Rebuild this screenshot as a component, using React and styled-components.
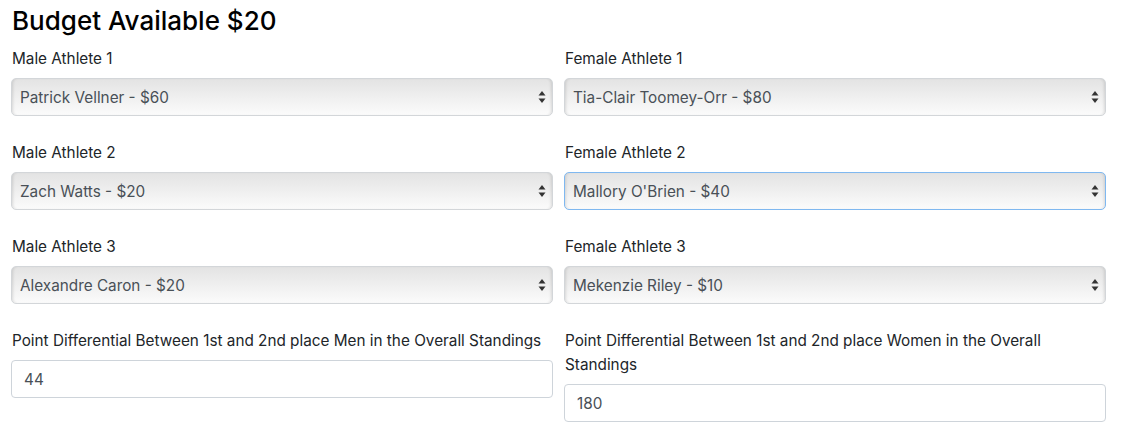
import React, { useState } from "react";
import styled, { createGlobalStyle } from "styled-components";

const GlobalStyle = createGlobalStyle`
  html, body {
    margin: 0;
    padding: 0;
    background: #fff;
  }
  body {
    font-family: Inter, "Liberation Sans", sans-serif;
    color: #212529;
  }
`;

const picks = [
  { male: "Patrick Vellner - $60", female: "Tia-Clair Toomey-Orr - $80" },
  { male: "Zach Watts - $20", female: "Mallory O'Brien - $40", focus: true },
  { male: "Alexandre Caron - $20", female: "Mekenzie Riley - $10" },
];

const Arrows = () => (
  <svg width="8" height="14" viewBox="0 0 8 14">
    <path d="M4 1 L7.5 5.5 L0.5 5.5 Z" fill="#333" />
    <path d="M4 13 L7.5 8.5 L0.5 8.5 Z" fill="#333" />
  </svg>
);

const AthleteSelect = ({ value, focus }) => {
  const [selected, setSelected] = useState(value);
  return (
    <SelectWrap>
      <Select
        $focus={focus}
        value={selected}
        onChange={(e) => setSelected(e.target.value)}
      >
        <option>{value}</option>
      </Select>
      <ArrowBox>
        <Arrows />
      </ArrowBox>
    </SelectWrap>
  );
};

export default function App() {
  return (
    <Page>
      <GlobalStyle />
      <Heading>Budget Available $20</Heading>
      {picks.map((p, i) => (
        <Row key={i}>
          <Group>
            <Label>Male Athlete {i + 1}</Label>
            <AthleteSelect value={p.male} />
          </Group>
          <Group>
            <Label>Female Athlete {i + 1}</Label>
            <AthleteSelect value={p.female} focus={p.focus} />
          </Group>
        </Row>
      ))}
      <Row>
        <Group>
          <Label>
            Point Differential Between 1st and 2nd place Men in the Overall
            Standings
          </Label>
          <Input type="text" defaultValue="44" />
        </Group>
        <Group>
          <Label>
            Point Differential Between 1st and 2nd place Women in the Overall
            Standings
          </Label>
          <Input type="text" defaultValue="180" />
        </Group>
      </Row>
    </Page>
  );
}

const Page = styled.div`
  padding: 4px 0 0 11px;
  width: 1095px;
`;

const Heading = styled.h3`
  margin: 0 0 8px 1px;
  font-size: 26px;
  font-weight: 500;
  line-height: 34px;
  color: #000;
`;

const Row = styled.div`
  display: grid;
  grid-template-columns: 542px 542px;
  column-gap: 11px;
  align-items: start;
`;

const Group = styled.div`
  display: flex;
  flex-direction: column;
  margin-bottom: 24px;
`;

const Label = styled.label`
  font-size: 15.3px;
  line-height: 24px;
  margin: 1px 0 7px 1px;
  color: #212529;
`;

const SelectWrap = styled.div`
  position: relative;
  height: 38px;
`;

const Select = styled.select`
  appearance: none;
  -webkit-appearance: none;
  width: 100%;
  height: 38px;
  box-sizing: border-box;
  padding: 0 28px 0 8px;
  font-family: inherit;
  font-size: 15.3px;
  color: #495057;
  border: 1px solid ${(p) => (p.$focus ? "#7fb8f0" : "#d3d6d9")};
  border-radius: 5px;
  background: linear-gradient(#e3e3e3, #f4f4f4 70%, #fbfbfb);
  box-shadow: inset 3px 0 3px -2px rgba(0, 0, 0, 0.12),
    inset -3px 0 3px -2px rgba(0, 0, 0, 0.12);
  outline: none;
`;

const ArrowBox = styled.span`
  position: absolute;
  right: 7px;
  top: 12px;
  pointer-events: none;
  display: flex;
`;

const Input = styled.input`
  box-sizing: border-box;
  width: 100%;
  height: 38px;
  padding: 0 12px;
  font-family: inherit;
  font-size: 15.3px;
  color: #495057;
  border: 1px solid #ced4da;
  border-radius: 4px;
  background: #fff;
  outline: none;
`;
